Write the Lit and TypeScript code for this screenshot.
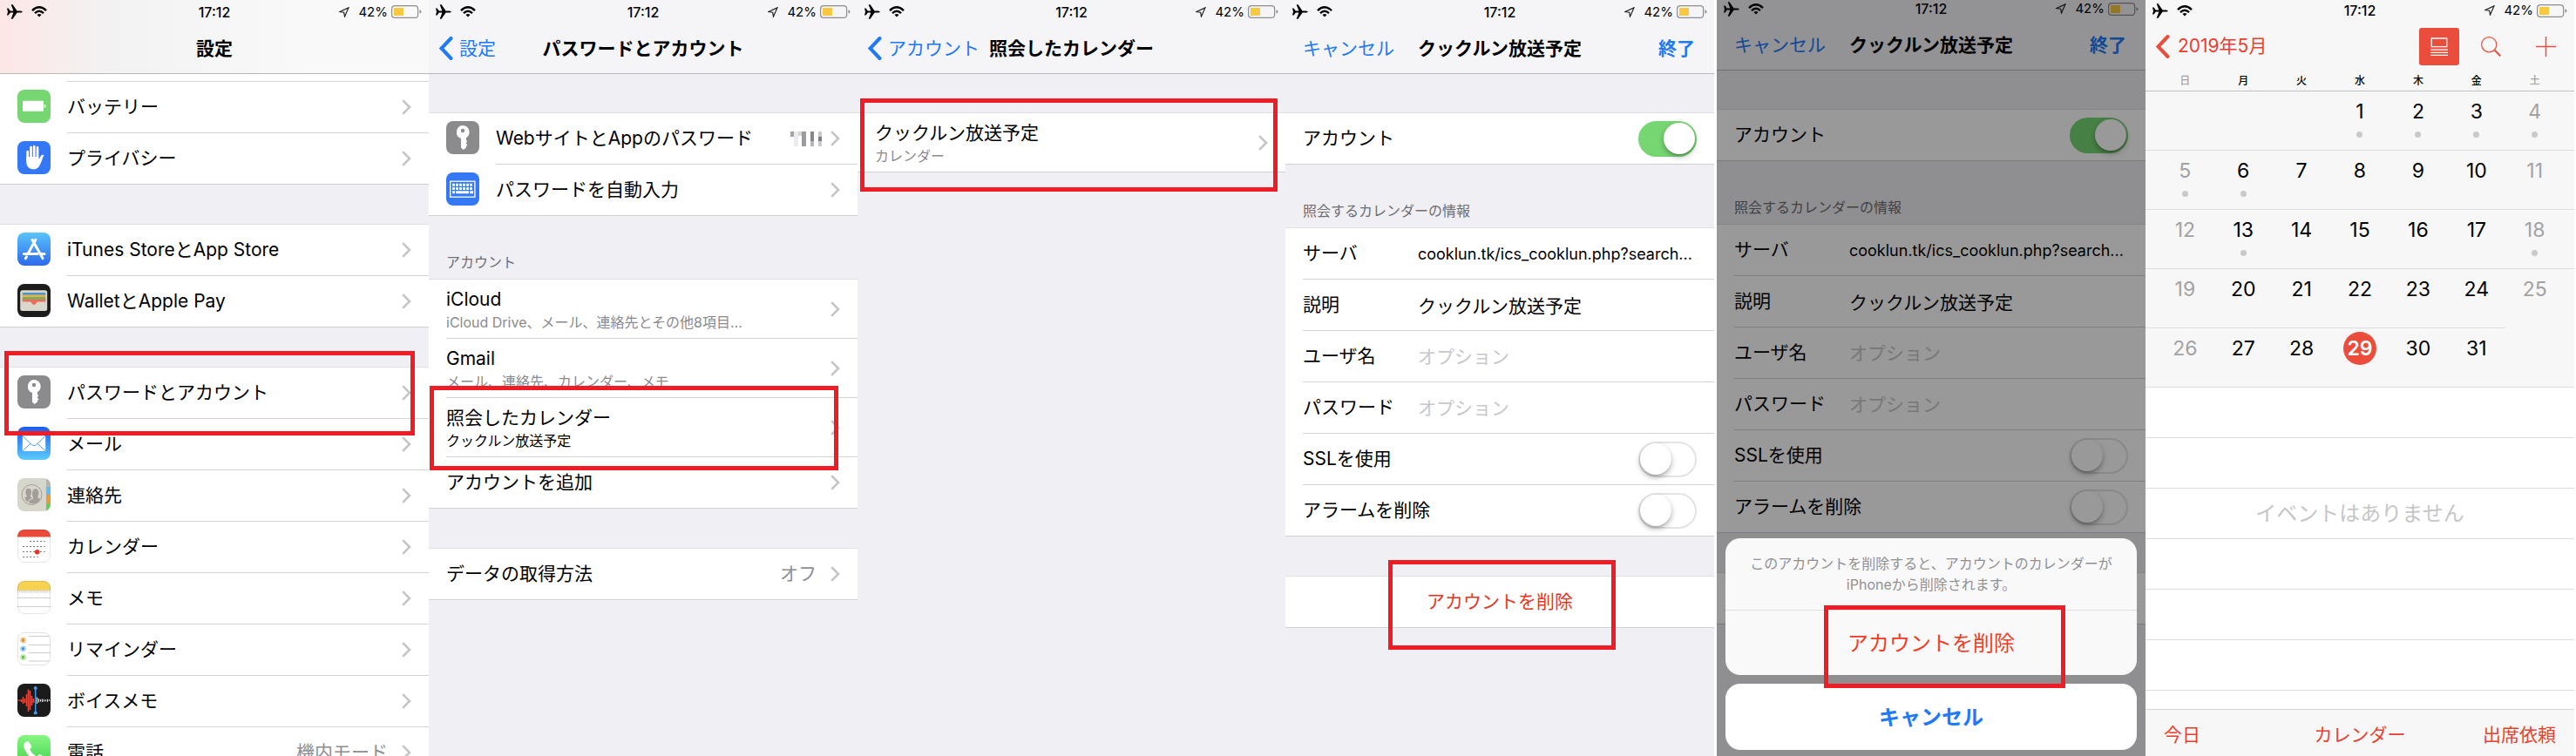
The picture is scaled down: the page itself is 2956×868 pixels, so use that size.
import { LitElement, html, css, svg, nothing, TemplateResult } from "lit";
import { customElement, property } from "lit/decorators.js";
import { classMap } from "lit/directives/class-map.js";

const base = css`
  * {
    box-sizing: border-box;
  }
  a {
    color: inherit;
    text-decoration: none;
  }
  button,
  input {
    font: inherit;
    color: inherit;
    margin: 0;
    padding: 0;
    border: 0;
    background: none;
  }
  svg {
    display: block;
    flex: none;
  }
`;

const listStyles = css`
  .group {
    background: #fff;
    border-top: 1px solid #e0e0e4;
    border-bottom: 1px solid #cfcfd4;
    margin-top: 45px;
  }
  .group.first {
    margin-top: 44px;
  }
  .group.titled {
    margin-top: 0;
  }
  .row {
    display: flex;
    padding-left: 20px;
    gap: 19px;
    line-height: 26px;
  }
  .row > app-icon {
    margin-top: 9px;
  }
  .body {
    flex: 1;
    min-width: 0;
    display: flex;
    align-items: center;
    gap: 16px;
    min-height: 59px;
    padding-right: 20px;
    border-bottom: 1px solid #d3d3d7;
  }
  .row:last-child .body {
    border-bottom: 0;
    min-height: 58px;
  }
  .tall .body {
    min-height: 68px;
  }
  .tall:last-child .body {
    min-height: 67px;
  }
  .label {
    flex: 1;
    min-width: 0;
    white-space: nowrap;
  }
  .tall .label {
    padding-top: 3px;
  }
  .sub {
    display: block;
    font-size: 16px;
    line-height: 24px;
    padding-top: 1px;
    color: #8a8a8d;
  }
  .sub.dark {
    color: #000;
  }
  .value {
    color: #8e8e93;
    white-space: nowrap;
  }
  .section {
    margin: 0;
    padding: 41px 20px 7px;
    font-size: 16px;
    line-height: 24px;
    font-weight: 400;
    color: #6d6d72;
  }
`;

const chevron = svg`<svg width="11" height="18" viewBox="0 0 11 18" fill="none" stroke="#c4c4c9" stroke-width="2.6"><path d="M1.2 1.2 9 9l-7.8 7.8"/></svg>`;

const icons: Record<string, TemplateResult> = {
  battery: svg`<rect width="38" height="38" rx="8" fill="#76d672"/><rect x="6" y="12.7" width="24" height="12" rx="1.2" fill="#fff"/><path d="M30.7 16.5c2.6.4 2.6 4 0 4.400z" fill="#fff"/>`,
  hand: svg`<rect width="38" height="38" rx="8" fill="#3478f6"/><g fill="none" stroke="#fff" stroke-linecap="round" stroke-width="2.7"><path d="M11.700 12v10M15.500 7v14M19.200 6.200v15M23 7.400v14"/></g><path d="M10.300 18h14.100v3c1-.8 1.700-3 2.700-4.500 1-1.300 3.500-1 3.300 0-1 1.200-2 5-3.400 8.200-1.800 4.400-3.700 7.600-8.300 7.600-5.400 0-8.400-3.300-8.400-8.300z" fill="#fff"/>`,
  store: svg`<defs><linearGradient id="s" x2="0" y2="1"><stop stop-color="#5ac5f9"/><stop offset="1" stop-color="#2d68ee"/></linearGradient></defs><rect width="38" height="38" rx="8" fill="url(#s)"/><g fill="none" stroke="#fff" stroke-width="3" stroke-linecap="round"><path d="M20.900 8.300 12.800 23M17 8.300l12 21.300M7.400 24.600h15.500M28 24.600h3M10.500 27.800l-1.200 2"/></g>`,
  wallet: svg`<rect width="38" height="38" rx="8" fill="#1c1c1c"/><rect x="3.200" y="7.200" width="31" height="23.800" rx="2.500" fill="#dad8cd"/><path d="M5.700 12.800v-1.500q0-1.300 1.300-1.300h24q1.300 0 1.300 1.300v1.500z" fill="#4495cb"/><path d="M5.700 12.600h26.600v2.800H5.700z" fill="#eab046"/><path d="M5.700 15.100h26.600v2.800H5.700z" fill="#6bb356"/><path d="M5.700 17.600h26.600v3h-9c-1.300 0-1.800 3.400-4.300 3.400s-3-3.400-4.300-3.400h-9z" fill="#e5705f"/>`,
  key: svg`<rect width="38" height="38" rx="8" fill="#8b8b8d"/><path fill-rule="evenodd" fill="#fff" d="M19 5a7.700 7.700 0 0 1 4 14.200v2.800l1.200 1.200-1.200 1.500v1.400l1.400 1.400-1.400 1.500v1.600L19.500 33 17 30.500V19.900A7.700 7.700 0 0 1 19 5zm0 3.800a2.200 2.200 0 1 0 0 4.400 2.200 2.200 0 0 0 0-4.400z"/>`,
  keyboard: svg`<rect width="38" height="38" rx="8" fill="#3478f6"/><rect x="4.700" y="10.200" width="28.200" height="18" fill="none" stroke="#fff" stroke-width="1.300"/><g stroke="#fff" stroke-width="3" stroke-dasharray="3 1"><path d="M7 14.200h24M7 18.500h24"/></g><path d="M7 21.300h3v3H7zM11 21.300h15v3H11zM27 21.300h4v3h-4z" fill="#fff"/>`,
  mail: svg`<defs><linearGradient id="m" x2="0" y2="1"><stop stop-color="#1a5bef"/><stop offset="1" stop-color="#5ccbfb"/></linearGradient></defs><rect width="38" height="38" rx="8" fill="url(#m)"/><rect x="5.800" y="10.300" width="26.400" height="17.600" rx="1" fill="#fff"/><path d="m6 10.600 10.500 10.200q2.500 2 5 0L32 10.600M6 27.700l9-8.400M32 27.700l-9-8.400" fill="none" stroke="#4a9cf3" stroke-width="1"/>`,
  contacts: svg`<defs><clipPath id="c"><rect width="38" height="38" rx="8"/></clipPath></defs><g clip-path="url(#c)"><path fill="#d6d6cd" d="M0 0h38v38H0z"/><path fill="#b5b5ae" d="M33 0h5v10h-5z"/><path fill="#64baf2" d="M33 10h5v9h-5z"/><path fill="#ef9636" d="M33 19h5v10h-5z"/><path fill="#68cc5d" d="M33 29h5v9h-5z"/></g><circle cx="16.500" cy="19" r="11.500" fill="none" stroke="#a49e98" stroke-width="1"/><path fill="#a49e98" d="M8.500 22.500c1-.8 2.300-1 2.300-2-.8-1.500-1.500-3-1.300-5 .2-2.600 1.400-3.800 3.200-3.800s3 1.200 3.300 3.800c.1 2-.6 3.500-1.300 5 0 1 1.500 1.300 2.300 2-3.500 1.700-4.300 3-5 5-2.300-1.600-3-3-3.500-5zM13 28c.6-3.800 4.600-3.500 5.300-5 .2-.9-1.600-2.500-1.300-6 .2-2.700 1.700-4.800 3.800-4.800s3.400 1.700 3.600 4.500c.1 2.600-1.200 4.300-1 5.600.3.700 1.800.9 2.600 1.400-2.400 6-9 6.600-13 4.300z"/>`,
  calendar: svg`<defs><clipPath id="k"><rect width="38" height="38" rx="8"/></clipPath></defs><g clip-path="url(#k)"><path fill="#fff" d="M0 0h38v38H0z"/><path fill="#e94b3a" d="M0 0h38v8.600H0z"/></g><rect x=".5" y=".5" width="37" height="37" rx="7.500" fill="none" stroke="#000" stroke-opacity=".1"/><g stroke="#222" stroke-width="1.200" stroke-dasharray="1.200 2.800"><path d="M14.500 13.500h17M6.500 19.500h25M6.500 25.500h25M6.500 31.500h17"/></g><circle cx="22.700" cy="25.700" r="2.800" fill="#e6372a"/>`,
  notes: svg`<defs><clipPath id="n"><rect width="38" height="38" rx="8"/></clipPath></defs><g clip-path="url(#n)"><path fill="#fff" d="M0 0h38v38H0z"/><path fill="#f7d251" d="M0 0h38v10.500H0z"/><path stroke="#cdbb8a" d="M0 11h38"/><path stroke="#bbb" stroke-dasharray="1 1" d="M0 13h38"/><path stroke="#cfcfcf" d="M0 19.500h38M0 29.500h38"/></g><rect x=".5" y=".5" width="37" height="37" rx="7.500" fill="none" stroke="#000" stroke-opacity=".1"/>`,
  reminders: svg`<rect x=".5" y=".5" width="37" height="37" rx="7.500" fill="#fff" stroke="#e2e2e2"/><path d="M13 4.500h24M13 14.500h24.500M13 23.500h24.500M13 33h24" stroke="#ccc"/><g fill="none"><circle cx="6.500" cy="9" r="2.900" stroke="#f3b26a"/><circle cx="6.500" cy="18.800" r="2.900" stroke="#85bff3"/><circle cx="6.500" cy="28.700" r="2.900" stroke="#97dc7d"/></g><circle cx="6.500" cy="9" r="1.900" fill="#ef8d1c"/><circle cx="6.500" cy="18.800" r="1.900" fill="#3a96ee"/><circle cx="6.500" cy="28.700" r="1.900" fill="#62cb3c"/>`,
  voice: svg`<rect width="38" height="38" rx="8" fill="#1b1b1c"/><path d="M0 19h7" stroke="#e2473b" stroke-width="1"/><path d="M4.500 18v3M6.500 15v8M8.500 17v5M10.500 12v14M12.500 6.500v25.500M14.500 8v22M16.500 14v11M18.500 17v5" stroke="#e2473b" stroke-width="1.600"/><path d="M22.500 15.500v7.500M24.500 17v4.500M26.500 18v2.500M28.500 17.500v3.500M30.500 18v2.500M32.500 18.200v2M34.500 17.700v3M36.500 18.300v1.800" stroke="#e8e8e8" stroke-width="1.100"/><path d="M20.700 5v28" stroke="#3f9bf3" stroke-width="1.500"/><circle cx="20.700" cy="5" r="2" fill="#3f9bf3"/><circle cx="20.700" cy="33.500" r="2" fill="#3f9bf3"/>`,
  phone: svg`<defs><linearGradient id="p" x2="0" y2="1"><stop stop-color="#87f682"/><stop offset="1" stop-color="#3fcf4a"/></linearGradient></defs><rect width="38" height="38" rx="8" fill="url(#p)"/><path fill="#fff" d="M8.200 9.300c1-1.400 2.800-3 4-2.200 1.500 1.200 3.300 4.200 3.900 5.300.6 1.300-.3 2.100-1.100 2.900-.9.800-.8 1.500-.2 2.500 1.600 2.500 3.700 4.500 6.100 6 1 .6 1.700.6 2.500-.3s1.600-1.700 2.900-1c1.100.6 4.200 2.500 5.200 3.900.9 1.300-.8 3.100-2.200 4.100-2.200 1.600-5 .9-7.700-.4-5.600-2.600-10.200-7.200-12.800-12.800-1.300-2.700-2.200-5.700-.6-8z"/>`,
};

@customElement("app-icon")
class AppIcon extends LitElement {
  @property() name = "";
  static styles = css`
    :host {
      display: block;
      flex: none;
    }
    svg {
      display: block;
    }
  `;
  render() {
    return html`<svg width="38" height="38" viewBox="0 0 38 38" aria-hidden="true">${icons[this.name]}</svg>`;
  }
}

@customElement("status-bar")
class StatusBar extends LitElement {
  static styles = [
    base,
    css`
      :host {
        display: grid;
        grid-template-columns: 1fr auto 1fr;
        align-items: center;
        height: 27px;
        padding: 0 8px;
        font-size: 16px;
        line-height: 20px;
        color: #000;
      }
      .side {
        display: flex;
        align-items: center;
        gap: 10px;
      }
      .end {
        justify-content: flex-end;
        font-size: 15px;
      }
      .time {
        font-weight: 500;
      }
      .power {
        display: flex;
        align-items: center;
        gap: 4px;
      }
    `,
  ];
  render() {
    return html`
      <div class="side">
        <svg width="18" height="17" viewBox="0 0 18 17">
          <path d="M0 4.500h1.600l2.200 2.900h3.600L4.700.3h1.900l5 7.100h4.300q1.900.3 1.900 1.100t-1.900 1.100h-4.300l-5 7.100H4.700l2.700-7.100H3.800l-2.200 2.900H0l1-4z" />
        </svg>
        <svg width="18" height="13" viewBox="0 0 18 13" fill="none" stroke="#000" stroke-width="2.400">
          <path d="M1 5.100q8-7.600 16 0M4 8.200q5-4.700 10 0" />
          <path d="M6.500 10q2.500-2 5 0L9 12.600z" fill="#000" stroke="none" />
        </svg>
      </div>
      <span class="time">17:12</span>
      <div class="side end">
        <svg width="12" height="12" viewBox="0 0 12 12" fill="none" stroke="#222" stroke-width="1.200">
          <path d="M11 .9.900 5.500l4.800.7.800 4.900z" />
        </svg>
        <div class="power">
          <span>42%</span>
          <svg width="35" height="15" viewBox="0 0 35 15">
            <rect x=".6" y=".6" width="30" height="13.800" rx="3.500" fill="none" stroke="#8d8d8f" stroke-width="1.200" />
            <rect x="3" y="3" width="11" height="9" fill="#f7c840" />
            <path d="M32.500 5.300q2 .6 2 2.200t-2 2.200z" fill="#8d8d8f" />
          </svg>
        </div>
      </div>
    `;
  }
}

@customElement("nav-bar")
class NavBar extends LitElement {
  @property() heading = "";
  @property() back = "";
  @property() cancel = "";
  @property() done = "";
  static styles = [
    base,
    css`
      :host {
        display: grid;
        grid-template-columns: 1fr auto 1fr;
        align-items: center;
        height: 58px;
        border-bottom: 1px solid #b9b9bd;
        line-height: 30px;
        white-space: nowrap;
      }
      h1 {
        margin: 0;
        font-size: 21px;
        font-weight: 600;
        color: #000;
      }
      .link {
        color: #2079f7;
      }
      .back {
        display: flex;
        align-items: center;
        gap: 7px;
        padding-left: 12px;
      }
      .cancel {
        justify-self: start;
        padding-left: 20px;
      }
      .done {
        justify-self: end;
        padding-right: 22px;
        font-weight: 600;
      }
    `,
  ];
  render() {
    return html`
      ${this.back
        ? html`<a class="link back" href="#">
            <svg width="16" height="27" viewBox="0 0 16 27" fill="none" stroke="#2079f7" stroke-width="4" stroke-linecap="round"><path d="M13.500 2 2.600 13.500 13.500 25" /></svg>${this.back}</a>`
        : this.cancel
          ? html`<button class="link cancel">${this.cancel}</button>`
          : html`<span></span>`}
      <h1>${this.heading}</h1>
      ${this.done ? html`<button class="link done">${this.done}</button>` : nothing}
    `;
  }
}

const iconRow = (icon: string, label: string, value: unknown = nothing) => html`
  <a class="row" href="#">
    <app-icon name=${icon}></app-icon>
    <span class="body"><span class="label">${label}</span>${value}${chevron}</span>
  </a>
`;

const plainRow = (label: string, value: unknown = nothing) => html`
  <a class="row" href="#"><span class="body"><span class="label">${label}</span>${value}${chevron}</span></a>
`;

const detailRow = (label: string, sub: string, dark = false) => html`
  <a class="row tall" href="#">
    <span class="body">
      <span class="label">${label}<span class=${classMap({ sub: true, dark })}>${sub}</span></span>${chevron}
    </span>
  </a>
`;

@customElement("settings-list")
class SettingsList extends LitElement {
  static styles = [
    base,
    listStyles,
    css`
      .stub {
        height: 9px;
        margin-left: 77px;
        border-bottom: 1px solid #d3d3d7;
      }
      .group.top {
        margin-top: 0;
        border-top: 0;
      }
    `,
  ];
  render() {
    return html`
      <div class="group top">
        <div class="stub"></div>
        ${iconRow("battery", "バッテリー")} ${iconRow("hand", "プライバシー")}
      </div>
      <div class="group">
        ${iconRow("store", "iTunes StoreとApp Store")} ${iconRow("wallet", "WalletとApple Pay")}
      </div>
      <div class="group">
        ${iconRow("key", "パスワードとアカウント")} ${iconRow("mail", "メール")}
        ${iconRow("contacts", "連絡先")} ${iconRow("calendar", "カレンダー")}
        ${iconRow("notes", "メモ")} ${iconRow("reminders", "リマインダー")}
        ${iconRow("voice", "ボイスメモ")}
        ${iconRow("phone", "電話", html`<span class="value">機内モード</span>`)}
      </div>
    `;
  }
}

const maskedCount = svg`<svg width="36" height="17" viewBox="0 0 36 17" shape-rendering="crispEdges"><path fill="#a2a2a8" d="M0 0h4v6H0z"/><path fill="#ececee" d="M4 0h5v17H4z"/><path fill="#d5d5d8" d="M9 0h4v5H9z"/><path fill="#9a9aa0" d="M13 0h5v17h-5z"/><path fill="#86868c" d="M23 0h4v17h-4z"/><path fill="#b5b5ba" d="M23 11h4v6h-4z"/><path fill="#c9c9cd" d="M32 0h4v17h-4z"/><path fill="#7c7c82" d="M32 6h4v5h-4z"/></svg>`;

@customElement("accounts-list")
class AccountsList extends LitElement {
  static styles = [base, listStyles, css`.masked { margin-right: -6px; }`];
  render() {
    return html`
      <div class="group first">
        ${iconRow("key", "WebサイトとAppのパスワード", html`<span class="masked">${maskedCount}</span>`)}
        ${iconRow("keyboard", "パスワードを自動入力")}
      </div>
      <h2 class="section">アカウント</h2>
      <div class="group titled">
        ${detailRow("iCloud", "iCloud Drive、メール、連絡先とその他8項目…")}
        ${detailRow("Gmail", "メール、連絡先、カレンダー、メモ")}
        ${detailRow("照会したカレンダー", "クックルン放送予定", true)}
        ${plainRow("アカウントを追加")}
      </div>
      <div class="group">${plainRow("データの取得方法", html`<span class="value">オフ</span>`)}</div>
    `;
  }
}

@customElement("subscribed-list")
class SubscribedList extends LitElement {
  static styles = [base, listStyles];
  render() {
    return html`<div class="group first">${detailRow("クックルン放送予定", "カレンダー")}</div>`;
  }
}

@customElement("account-form")
class AccountForm extends LitElement {
  @property({ type: Boolean }) confirming = false;
  static styles = [
    base,
    listStyles,
    css`
      .name {
        width: 132px;
        flex: none;
      }
      .field {
        gap: 0;
      }
      .field input {
        flex: 1;
        min-width: 0;
        height: 30px;
        outline: 0;
      }
      .field .server {
        font-size: 18px;
      }
      input::placeholder {
        color: #c7c7cc;
        opacity: 1;
      }
      .switch {
        appearance: none;
        flex: none;
        position: relative;
        width: 67px;
        height: 41px;
        border-radius: 21px;
        border: 2px solid #e3e3e3;
        background: #fff;
      }
      .switch::before {
        content: "";
        position: absolute;
        top: 0;
        left: 0;
        width: 36px;
        height: 36px;
        border-radius: 50%;
        background: #fff;
        box-shadow: 0 3px 6px rgba(0, 0, 0, 0.3), 0 1px 1px rgba(0, 0, 0, 0.15);
      }
      .switch:checked {
        border-color: #76d672;
        background: #76d672;
      }
      .switch:checked::before {
        left: auto;
        right: 0;
      }
      .delete {
        display: block;
        width: 100%;
        height: 58px;
        padding-bottom: 4px;
        color: #e9351f;
      }
    `,
  ];
  private toggle(id: string, label: string, on = false) {
    return html`<div class="row"><div class="body">
      <label class="label" for=${id}>${label}</label>
      <input class="switch" type="checkbox" role="switch" id=${id} .checked=${on} />
    </div></div>`;
  }
  private field(id: string, label: string, value: string, type = "text") {
    return html`<div class="row"><div class="body field">
      <label class="name" for=${id}>${label}</label>
      <input class=${id} id=${id} type=${type} .value=${value} placeholder="オプション" />
    </div></div>`;
  }
  render() {
    return html`
      <div class="group first">${this.toggle("account", "アカウント", true)}</div>
      <h2 class="section">照会するカレンダーの情報</h2>
      <div class="group titled">
        ${this.field("server", "サーバ", "cooklun.tk/ics_cooklun.php?search...")}
        ${this.field("description", "説明", "クックルン放送予定")}
        ${this.field("user", "ユーザ名", "")}
        ${this.field("password", "パスワード", "", "password")}
        ${this.toggle("ssl", "SSLを使用")}
        ${this.toggle("alarm", "アラームを削除")}
      </div>
      <div class="group">
        <button class="delete" ?disabled=${this.confirming}>${this.confirming ? nothing : "アカウントを削除"}</button>
      </div>
    `;
  }
}

@customElement("action-sheet")
class ActionSheet extends LitElement {
  static styles = [
    base,
    css`
      :host {
        position: absolute;
        left: 10px;
        right: 10px;
        bottom: 7px;
        display: flex;
        flex-direction: column;
        gap: 10px;
        text-align: center;
        font-size: 24px;
      }
      .card {
        border-radius: 17px;
        background: #f9f9f9;
      }
      p {
        margin: 0;
        padding: 17px 20px;
        border-bottom: 1px solid #dedede;
        font-size: 16px;
        line-height: 24px;
        color: #909092;
      }
      button {
        display: block;
        width: 100%;
        height: 74px;
        padding-bottom: 4px;
      }
      .destroy {
        color: #f03b26;
      }
      .cancel {
        height: 76px;
        border-radius: 17px;
        background: #fff;
        color: #2079f7;
        font-weight: 600;
      }
    `,
  ];
  render() {
    return html`
      <div class="card">
        <p>このアカウントを削除すると、アカウントのカレンダーが<br />iPhoneから削除されます。</p>
        <button class="destroy">アカウントを削除</button>
      </div>
      <button class="cancel">キャンセル</button>
    `;
  }
}

const weekdays = ["日", "月", "火", "水", "木", "金", "土"];
const weeks = Array.from({ length: 5 }, (_, w) =>
  Array.from({ length: 7 }, (_, d) => {
    const n = w * 7 + d - 2;
    return n >= 1 && n <= 31 ? n : 0;
  }),
);
const marked = new Set([1, 2, 3, 4, 5, 6, 13, 18]);

@customElement("month-view")
class MonthView extends LitElement {
  static styles = [
    base,
    css`
      :host {
        flex: 1;
        min-height: 0;
        display: flex;
        flex-direction: column;
        background: #fff;
        color: #e8402e;
      }
      .head {
        display: flex;
        align-items: center;
        height: 58px;
        padding: 0 21px 0 12px;
        background: #f7f7f7;
        line-height: 30px;
      }
      .back {
        flex: 1;
        display: flex;
        align-items: center;
        gap: 9px;
      }
      .toggle {
        display: grid;
        place-items: center;
        width: 46px;
        height: 43px;
        margin-right: 25px;
        border-radius: 3px;
        background: #eb4d3d;
      }
      .search {
        margin-right: 40px;
      }
      table {
        width: 100%;
        border-spacing: 0;
        table-layout: fixed;
        background: #f7f7f7;
        color: #000;
      }
      th {
        height: 23px;
        padding: 0;
        border-bottom: 1px solid #bfbfc1;
        font-size: 12px;
        line-height: 16px;
        font-weight: 500;
      }
      th:first-child,
      th:last-child {
        width: 16%;
      }
      td {
        height: 68px;
        padding: 4px 0 0;
        border-bottom: 1px solid #dcdcde;
        vertical-align: top;
        text-align: center;
        font-size: 23px;
        line-height: 38px;
      }
      th:first-child,
      td:first-child {
        padding-left: 12px;
        color: #a2a2a4;
      }
      th:last-child,
      td:last-child {
        padding-right: 12px;
        color: #a2a2a4;
      }
      td.open {
        border-bottom-color: transparent;
      }
      .day {
        display: block;
        width: 38px;
        margin: 0 auto;
        border-radius: 50%;
      }
      .today {
        background: #eb4d3d;
        color: #fff;
        font-weight: 600;
      }
      .dot {
        display: block;
        width: 7px;
        height: 7px;
        margin: 4px auto 0;
        border-radius: 50%;
        background: #c9c9cb;
      }
      .events {
        flex: 1;
        min-height: 0;
        overflow: hidden;
      }
      .slot {
        height: 58px;
        border-bottom: 1px solid #dcdcde;
        text-align: center;
        font-size: 24px;
        line-height: 57px;
        color: #c6c6c8;
      }
      .tools {
        display: grid;
        grid-template-columns: 1fr auto 1fr;
        padding: 14px 21px 9px;
        border-top: 1px solid #d8d8da;
        background: #f7f7f7;
        line-height: 30px;
      }
      .tools button:first-child {
        justify-self: start;
      }
      .tools button:last-child {
        justify-self: end;
      }
    `,
  ];
  render() {
    return html`
      <div class="head">
        <a class="back" href="#">
          <svg width="16" height="27" viewBox="0 0 16 27" fill="none" stroke="#eb4d3d" stroke-width="4" stroke-linecap="round"><path d="M13.500 2 2.600 13.500 13.500 25" /></svg>2019年5月</a>
        <button class="toggle" aria-label="リスト">
          <svg width="20" height="21" viewBox="0 0 20 21" fill="none" stroke="#fff" stroke-width="1.300"><path d="M1.200 1h17.600v9.600H1.200zM0 14.200h20M0 17.300h20M0 20.300h20" /></svg>
        </button>
        <button class="search" aria-label="検索">
          <svg width="23" height="23" viewBox="0 0 23 23" fill="none" stroke="#eb4d3d"><circle cx="9.200" cy="9.200" r="8.600" stroke-width="1.200" /><path d="m15.500 15.500 6.700 6.700" stroke-width="2" /></svg>
        </button>
        <button aria-label="追加">
          <svg width="23" height="23" viewBox="0 0 23 23" stroke="#eb4d3d" stroke-width="1.500"><path d="M11.500 0v23M0 11.500h23" /></svg>
        </button>
      </div>
      <table>
        <thead>
          <tr>${weekdays.map((d) => html`<th scope="col">${d}</th>`)}</tr>
        </thead>
        <tbody>
          ${weeks.map(
            (week, w) => html`<tr>
              ${week.map(
                (n, d) => html`<td class=${classMap({ open: w === 3 && d === 6 })}>
                  ${n ? html`<span class=${classMap({ day: true, today: n === 29 })}>${n}</span>` : nothing}
                  ${marked.has(n) ? html`<span class="dot"></span>` : nothing}
                </td>`,
              )}
            </tr>`,
          )}
        </tbody>
      </table>
      <div class="events">
        ${["", "", "イベントはありません", "", "", ""].map((t) => html`<div class="slot">${t}</div>`)}
      </div>
      <div class="tools">
        <button>今日</button><button>カレンダー</button><button>出席依頼</button>
      </div>
    `;
  }
}

@customElement("app-root")
class AppRoot extends LitElement {
  static styles = [
    base,
    css`
      :host {
        display: block;
        background: #fff;
        color: #000;
        font-family: Inter, "Noto Sans CJK JP", sans-serif;
        font-size: 21px;
      }
      main {
        display: grid;
        grid-template-columns: 492fr 492fr 491fr 495fr 492fr 494fr;
        height: 100vh;
        overflow: hidden;
      }
      .phone {
        position: relative;
        display: flex;
        flex-direction: column;
        min-width: 0;
        min-height: 0;
        overflow: hidden;
        background: #efeff4;
      }
      .form {
        margin-right: 3px;
      }
      .month {
        margin-right: 2px;
        background: #f7f7f7;
      }
      .top {
        flex: none;
        background: #f5f5f8;
      }
      .tinted {
        background: linear-gradient(90deg, #fde6e6, #f3f2f2 25%, #f9f9f9 70%);
      }
      .sheet status-bar {
        height: 23px;
        padding-bottom: 3px;
      }
      .month status-bar {
        flex: none;
        height: 24px;
      }
      .shade {
        position: absolute;
        inset: 0;
        background: rgba(0, 0, 0, 0.4);
      }
      .mark {
        position: absolute;
        border: 5px solid #ee1c25;
        pointer-events: none;
      }
      .m1 {
        left: 5px;
        right: 16px;
        top: 403px;
        height: 97px;
      }
      .m2 {
        left: 1px;
        right: 22px;
        top: 443px;
        height: 97px;
      }
      .m3 {
        left: 3px;
        right: 9px;
        top: 113px;
        height: 107px;
      }
      .m4 {
        left: 118px;
        right: 113px;
        top: 643px;
        height: 103px;
      }
      .m5 {
        left: 123px;
        right: 92px;
        top: 695px;
        height: 95px;
      }
    `,
  ];
  render() {
    return html`
      <main>
        <section class="phone">
          <div class="top tinted"><status-bar></status-bar><nav-bar heading="設定"></nav-bar></div>
          <settings-list></settings-list>
          <div class="mark m1"></div>
        </section>
        <section class="phone">
          <div class="top"><status-bar></status-bar><nav-bar heading="パスワードとアカウント" back="設定"></nav-bar></div>
          <accounts-list></accounts-list>
          <div class="mark m2"></div>
        </section>
        <section class="phone">
          <div class="top"><status-bar></status-bar><nav-bar heading="照会したカレンダー" back="アカウント"></nav-bar></div>
          <subscribed-list></subscribed-list>
          <div class="mark m3"></div>
        </section>
        <section class="phone form">
          <div class="top"><status-bar></status-bar><nav-bar heading="クックルン放送予定" cancel="キャンセル" done="終了"></nav-bar></div>
          <account-form></account-form>
          <div class="mark m4"></div>
        </section>
        <section class="phone sheet">
          <div class="top"><status-bar></status-bar><nav-bar heading="クックルン放送予定" cancel="キャンセル" done="終了"></nav-bar></div>
          <account-form confirming></account-form>
          <div class="shade"></div>
          <action-sheet></action-sheet>
          <div class="mark m5"></div>
        </section>
        <section class="phone month">
          <status-bar></status-bar>
          <month-view></month-view>
        </section>
      </main>
    `;
  }
}
